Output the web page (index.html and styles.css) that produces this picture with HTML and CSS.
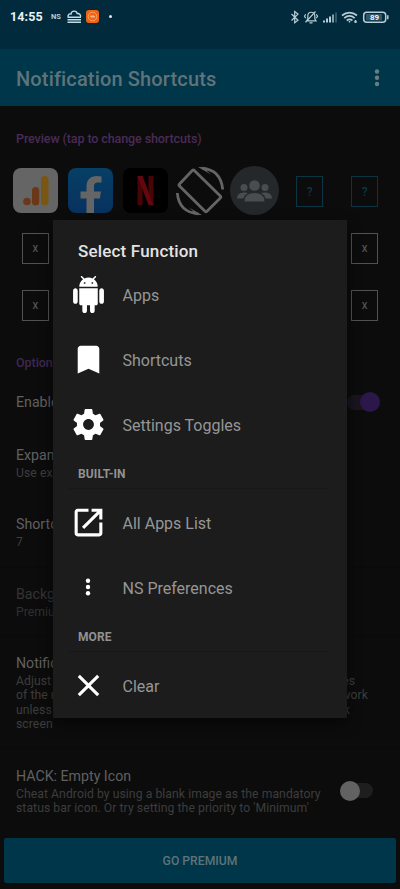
FILE: index.html
```html
<!DOCTYPE html>
<html lang="en">
<head>
<meta charset="utf-8">
<title>Notification Shortcuts</title>
<link rel="stylesheet" href="styles.css">
</head>
<body>
<div class="screen">
  <header class="status">
    <span class="clock">14:55</span>
    <span class="ns">NS</span>
    <svg class="cloud" width="15" height="14" viewBox="0 0 15 14" fill="none" stroke="#c3dbe3" stroke-width="1.4"><path d="M1 6.5C1 4 3 3.700 4 4C4.500.3 9.500.2 10.200 3.500C12.500 3.200 13.500 4.500 13.700 6.500M.5 7.300H14M.5 9.800H14M.5 12.300H14"/></svg>
    <svg class="orange" width="13" height="13" viewBox="0 0 13 13"><rect width="13" height="13" rx="3" fill="#f26310"/><circle cx="6.500" cy="6.500" r="4.300" fill="none" stroke="#f9a06b"/><path d="M4 6.500h5M5 5l1 3M7 5l1 3" stroke="#fac09b" stroke-width=".8"/></svg>
    <i class="dot"></i>
    <svg class="sys" width="102" height="16" viewBox="0 0 102 16" fill="none" stroke="#b8cdd5" stroke-width="1.200">
      <path d="M1.500 5l6.500 6.200-3.300 2.600V2.500l3.300 2.600L1.500 11.500"/>
      <path d="M16.500 11.800h9.500l-1.200-2V7c0-5-7-5-7 0v3zM19.500 13.800h3M25.500 2.500L15.500 13.300M15.700 5.200l-1.200 2 1.200 2M26.300 5.200l1.200 2-1.200 2"/>
      <g stroke-width="2"><path d="M34 11.500V13.500M37 9.500v4M40 7.500v6"/><path d="M43 5.500v8" stroke="#84a0ac"/><path d="M46 3.500v10" stroke="#31566a"/></g>
      <g stroke-width="1.700"><path d="M52 6.500c4.500-3.800 10.500-3.800 15 0M54.200 9.200c3.200-2.700 7.300-2.700 10.500 0M56.700 11.500c1.700-1.300 4-1.300 5.700 0"/></g><path d="M59.500 12v1.500M65.500 11v3M64.300 12.800h2.500" stroke-width="1.500"/>
      <rect x="73.700" y="3.200" width="22" height="10" rx="3" stroke-width="1.500"/><rect x="76" y="5" width="16" height="6.500" fill="#31566a" stroke="none"/><path d="M97.800 6.300v4" stroke-width="1.500"/>
      <text x="84.500" y="11.300" class="pct">89</text>
    </svg>
  </header>
  <div class="toolbar"><h1>Notification Shortcuts</h1><svg width="6" height="18" viewBox="0 0 6 18" fill="#697d84"><circle cx="3" cy="2.500" r="2.200"/><circle cx="3" cy="8.700" r="2.200"/><circle cx="3" cy="15" r="2.200"/></svg></div>
  <main>
    <h2 class="preview">Preview (tap to change shortcuts)</h2>
    <div class="slots">
      <svg width="45" height="45" viewBox="0 0 45 45"><rect width="45" height="45" rx="8" fill="#656565"/><circle cx="14" cy="33.500" r="3.800" fill="#6a3818"/><rect x="19" y="19" width="7.200" height="18.500" rx="3.500" fill="#6a3818"/><rect x="28" y="8" width="7.500" height="29.500" rx="3.700" fill="#795713"/></svg>
      <svg width="45" height="45" viewBox="0 0 45 45"><defs><linearGradient id="blue" x2="0" y2="1"><stop stop-color="#063f65"/><stop offset="1" stop-color="#08325f"/></linearGradient></defs><rect width="45" height="45" rx="8" fill="url(#blue)"/><path d="M18.500 45V30.500h-6V23.500h6V19c0-7.500 4-11 10.500-11q3 0 4.500.4v6h-3.200c-3.300 0-4.300 1.500-4.300 4.300v4.800h7l-1.200 7H26V45z" fill="#656565"/></svg>
      <svg width="45" height="45" viewBox="0 0 45 45"><rect width="45" height="45" rx="8" fill="#000"/><path d="M14.500 8h5v29l-5 .5zM25.500 8h5v29.500l-5-.5z" fill="#490408"/><path d="M14.500 8h5l11 29.500-5-.6z" fill="#65070e"/></svg>
      <svg width="50" height="50" viewBox="0 0 50 50" fill="none" stroke="#656565" stroke-width="2.800" stroke-linejoin="round"><path d="M19.300 4.500L45.300 30Q46.300 31 45.300 32L32 45.300Q31 46.300 30 45.300L4.500 20Q3.500 19 4.500 18L17.300 4.500Q18.300 3.500 19.300 4.500z"/><path d="M27 2.200Q46 4 47.700 23.500M23 47.800Q4 46 2.300 27"/><path d="M23 1q6-.5 10 1.500l-1 2.500 4 3.500zM27 49q-6 .5-10-1.500l1-2.500-4-3.500z" fill="#656565" stroke="none"/></svg>
      <svg width="49" height="49" viewBox="0 0 49 49"><circle cx="24.500" cy="24.500" r="24.500" fill="#24282b"/><g fill="#4a4d4f"><circle cx="24.500" cy="19.500" r="5.300"/><circle cx="14" cy="21.500" r="3.500"/><circle cx="35" cy="21.500" r="3.500"/><path d="M14.500 35.500q0-8.500 10-8.500t10 8.500zM7 32.500q0-6.500 8-6 2 0 3 .7-4 2-4.500 5.300zM42 32.500q0-6.500-8-6-2 0-3 .7 4 2 4.500 5.300z"/></g></svg>
      <span class="box q">?</span><span class="box q">?</span>
      <span class="box left">X</span><span class="box right">X</span>
      <span class="box left">X</span><span class="box right">X</span>
    </div>
    <h2 class="options">Options</h2>
    <section class="row enable"><div class="title">Enable</div><span class="switch on"></span></section>
    <section class="row"><div><div class="title">Expand</div><div class="sub">Use exp</div></div></section>
    <section class="row"><div><div class="title">Shortcut</div><div class="sub">7</div></div></section>
    <section class="row line off"><div><div class="title">Backgr</div><div class="sub">Premium</div></div></section>
    <section class="row line notif"><div class="title">Notific</div>
      <div class="sub pair p1"><span>Adjust</span><span>es</span></div>
      <div class="sub pair p2"><span>of the n</span><span>work</span></div>
      <div class="sub pair p3"><span>unless</span><span>k</span></div>
      <div class="sub">screen</div>
    </section>
    <section class="row line hack"><div><div class="title">HACK: Empty Icon</div><div class="sub">Cheat Android by using a blank image as the mandatory<br>status bar icon. Or try setting the priority to 'Minimum'</div></div><span class="switch"></span></section>
    <div class="premium">GO PREMIUM</div>
  </main>
  <div class="dialog">
    <h3>Select Function</h3>
    <div class="item"><svg width="37" height="37" viewBox="0 0 24 24" fill="#fff"><path d="M6 18c0 .550.450 1 1 1h1v3.500c0 .830.670 1.500 1.500 1.500s1.500-.670 1.500-1.500V19h2v3.500c0 .830.670 1.500 1.500 1.500s1.500-.670 1.500-1.500V19h1c.550 0 1-.450 1-1V8H6v10zM3.500 8C2.670 8 2 8.670 2 9.500v7c0 .830.670 1.500 1.500 1.500S5 17.330 5 16.500v-7C5 8.670 4.330 8 3.500 8zm17 0c-.830 0-1.500.670-1.500 1.500v7c0 .830.670 1.500 1.500 1.500s1.500-.670 1.500-1.500v-7c0-.830-.670-1.500-1.500-1.500zm-4.970-5.840l1.300-1.300c.200-.200.200-.510 0-.710-.200-.200-.510-.200-.710 0l-1.480 1.480C13.850 1.230 12.950 1 12 1c-.960 0-1.860.230-2.660.630L7.850.150c-.200-.200-.510-.200-.710 0-.200.200-.200.510 0 .710l1.310 1.310C6.970 3.260 6 5.010 6 7h12c0-1.990-.970-3.750-2.470-4.840zM10 5H9V4h1v1zm5 0h-1V4h1v1z"/></svg><span>Apps</span></div>
    <div class="item"><svg width="37" height="37" viewBox="0 0 24 24" fill="#fff"><path d="M17 3H7c-1.100 0-1.990.9-1.990 2L5 21l7-3 7 3V5c0-1.100-.9-2-2-2z"/></svg><span>Shortcuts</span></div>
    <div class="item"><svg width="37" height="37" viewBox="0 0 24 24" fill="#fff"><path d="M19.430 12.980c.040-.320.070-.640.070-.980s-.030-.660-.070-.980l2.110-1.650c.190-.150.240-.420.120-.640l-2-3.460c-.120-.220-.390-.300-.610-.220l-2.490 1c-.520-.400-1.080-.730-1.690-.980l-.380-2.650C14.460 2.180 14.250 2 14 2h-4c-.250 0-.460.180-.490.420l-.380 2.650c-.610.250-1.170.590-1.690.980l-2.490-1c-.230-.090-.490 0-.610.220l-2 3.460c-.130.220-.070.490.120.640l2.110 1.650c-.040.320-.070.650-.070.980s.030.660.070.980l-2.110 1.650c-.190.150-.240.420-.120.640l2 3.460c.120.220.390.300.610.220l2.490-1c.520.400 1.080.730 1.690.980l.380 2.650c.030.240.240.420.490.420h4c.250 0 .460-.180.490-.420l.380-2.650c.610-.250 1.170-.590 1.690-.980l2.490 1c.230.090.490 0 .610-.220l2-3.460c.120-.220.070-.490-.120-.640l-2.110-1.650zM12 15.500c-1.930 0-3.500-1.570-3.500-3.500s1.570-3.500 3.500-3.500 3.500 1.570 3.500 3.500-1.570 3.500-3.500 3.500z"/></svg><span>Settings Toggles</span></div>
    <h4>BUILT-IN</h4>
    <div class="item"><svg width="37" height="37" viewBox="0 0 24 24" fill="#fff"><path d="M19 19H5V5h7V3H5c-1.110 0-2 .9-2 2v14c0 1.100.890 2 2 2h14c1.100 0 2-.9 2-2v-7h-2v7zM14 3v2h3.590l-9.830 9.830 1.410 1.410L19 6.410V10h2V3h-7z"/></svg><span>All Apps List</span></div>
    <div class="item"><svg width="24" height="24" viewBox="0 0 24 24" fill="#fff"><circle cx="12" cy="5.800" r="2.200"/><circle cx="12" cy="12" r="2.200"/><circle cx="12" cy="18.200" r="2.200"/></svg><span>NS Preferences</span></div>
    <h4>MORE</h4>
    <div class="item"><svg width="37" height="37" viewBox="0 0 24 24" fill="#fff"><path d="M19 6.410L17.590 5 12 10.590 6.410 5 5 6.410 10.590 12 5 17.590 6.410 19 12 13.410 17.590 19 19 17.590 13.410 12z"/></svg><span>Clear</span></div>
  </div>
</div>
</body>
</html>
```
FILE: styles.css
```css
* { box-sizing: border-box; }
body { margin: 0; background: #0c0c0c; font-family: Roboto, sans-serif; }
h1, h2, h3, h4 { margin: 0; font-weight: 500; }
svg { display: block; flex: none; }
.screen { position: relative; width: 400px; height: 889px; overflow: hidden; }
.status { height: 49px; background: #012a3d; display: flex; padding: 0 8px 16px 10px; align-items: center; }
.clock { color: #e8f3f6; font-size: 12.500px; font-weight: 700; letter-spacing: .1px; width: 41px; }
.ns { color: #b8cdd5; font-size: 7.500px; font-weight: 700; width: 16px; }
.cloud { margin-right: 4px; }
.dot { width: 3px; height: 3px; border-radius: 50%; background: #dcebef; margin-left: 10px; }
.sys { margin-left: auto; }
.pct { font: 700 8px Roboto, sans-serif; fill: #e8f3f6; stroke: none; text-anchor: middle; }
.toolbar { height: 57px; background: #003649; display: flex; align-items: center; justify-content: space-between; padding: 0 20px 0 16px; }
.toolbar h1 { font-size: 20px; letter-spacing: .15px; line-height: 24px; color: #5f737a; padding-top: 2px; }
h2 { font-size: 12.500px; line-height: 16px; color: #4a2b57; padding-left: 16px; }
.preview { height: 56px; padding-top: 25px; letter-spacing: -.1px; }
.slots { display: grid; grid-template-columns: repeat(7, 1fr); grid-auto-rows: 57px; padding: 0 8px; place-items: center; height: 171px; }
.box { width: 27px; height: 31px; margin-top: 1px; border: 1px solid #525252; color: #555; font-size: 9px; font-weight: 500; display: flex; align-items: center; justify-content: center; padding-top: 1px; }
.q { border-color: #0c3543; color: #0c3543; font-size: 12px; }
.left { grid-column: 1; }
.right { grid-column: 7; }
.options { height: 49px; padding-top: 22px; color: #3f2850; letter-spacing: -.05px; }
.row { height: 69px; padding: 0 16px; display: flex; align-items: center; justify-content: space-between; }
.row.enable { height: 47px; padding-bottom: 7px; }
.line { border-top: 1px solid #0a0a0a; }
.title { font-size: 14.200px; line-height: 19px; color: #606060; }
.title + .sub { margin-top: 1px; }
.sub { font-size: 12.200px; line-height: 14.400px; color: #3d3d3d; letter-spacing: .06px; }
.off .title { color: #343434; }
.off .sub { color: #303030; }
.row.notif { height: 112px; display: block; padding-top: 17px; }
.pair { display: flex; justify-content: space-between; }
.p1 { width: 339px; }
.p2 { width: 352px; }
.p3 { width: 334px; }
.row.hack { height: 86px; padding: 0 27px 1px 16px; }
.hack .switch { margin-bottom: 1px; }
.switch { width: 33px; height: 15px; border-radius: 8px; background: #1e1e1e; display: flex; align-items: center; }
.switch::before { content: ""; width: 20px; height: 20px; border-radius: 50%; background: #626262; flex: none; }
.on { background: #19141e; justify-content: flex-end; margin-right: 4px; }
.on::before { background: #2c174b; }
.premium { margin: 4px 4px 0; height: 45px; border-radius: 2px; background: #003649; color: #5f737a; font-size: 12.200px; font-weight: 500; display: flex; align-items: center; justify-content: center; }
.dialog { position: absolute; left: 53px; top: 220px; width: 294px; height: 498px; background: #1c1c1c; box-shadow: 0 5px 14px #0008; border-radius: 1px; }
.dialog h3 { height: 42.500px; padding: 20px 25px 0; font-size: 17px; letter-spacing: .17px; line-height: 22px; color: #e3e3e3; }
.item { height: 65px; display: grid; grid-template-columns: 69.500px 1fr; align-items: center; }
.item svg { justify-self: center; margin: 0 0 2px 1px; }
.item span { font-size: 16px; color: #969696; }
.dialog h4 { height: 33px; margin: 0; padding: 8px 25px 0; font-size: 12px; letter-spacing: .1px; line-height: 16px; font-weight: 700; color: #929292; background: linear-gradient(#171717, #171717) 16px 30px / 260px 1px no-repeat; }
```
